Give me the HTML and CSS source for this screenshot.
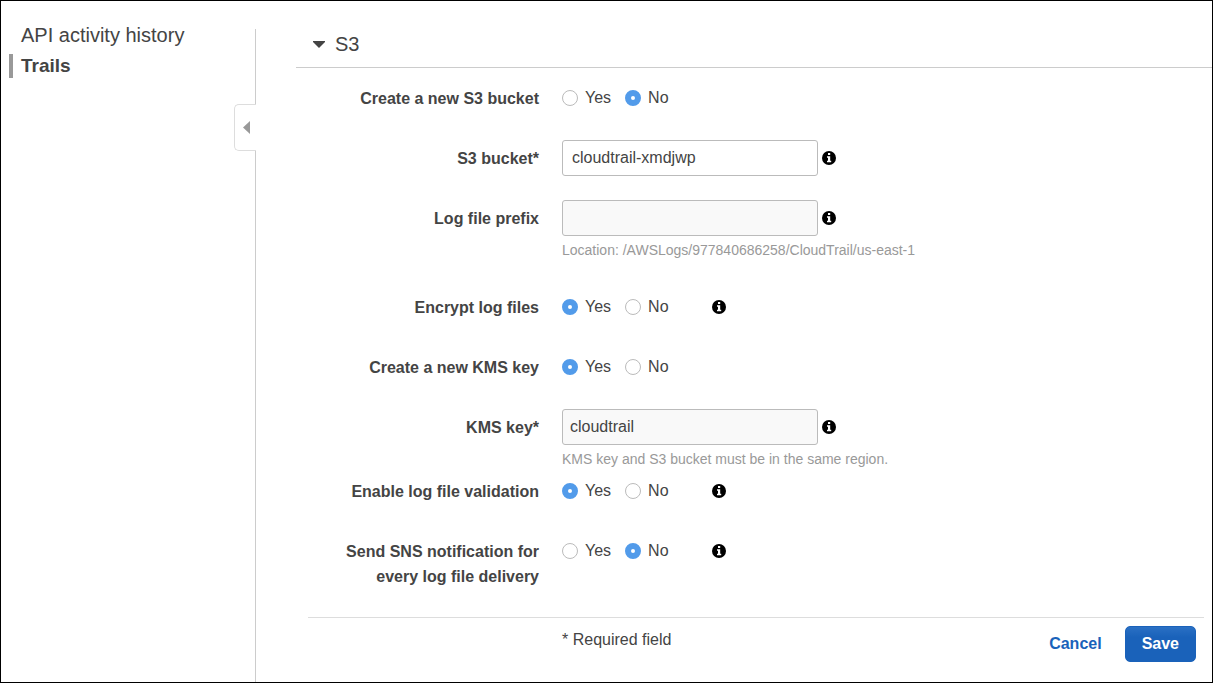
FILE: index.html
```html
<!DOCTYPE html>
<html lang="en">
<head>
<meta charset="utf-8">
<meta name="viewport" content="width=device-width, initial-scale=1">
<title>CloudTrail - Trails</title>
<link rel="stylesheet" href="styles.css">
</head>
<body>
<svg class="sprite" aria-hidden="true">
  <symbol id="info" viewBox="0 0 14 14">
    <circle cx="7" cy="7" r="7" fill="#000"/>
    <path fill="#fff" d="M6 2h2.200v2H6zM5 5.200h3.200V9.800H9.200v1.500H5V9.800h1V6.700H5z"/>
  </symbol>
</svg>
<div class="page">
  <aside class="sidebar">
    <nav class="nav">
      <a class="nav-link" href="#history">API activity history</a>
      <a class="nav-link current" href="#trails" aria-current="page">Trails</a>
    </nav>
    <div class="divider">
      <button class="collapse" type="button" aria-label="Collapse navigation"><svg width="7" height="13" viewBox="0 0 7 13"><path d="M7 0v13L0 6.500z" fill="#999"/></svg></button>
    </div>
  </aside>
  <main class="main">
    <h2 class="section-title"><svg width="12" height="7" viewBox="0 0 12 7" aria-hidden="true"><path d="M0 0h12v1L6 7 0 1z" fill="#444"/></svg>S3</h2>
    <form class="form">
      <div class="row" role="radiogroup" aria-labelledby="l1">
        <span class="label" id="l1">Create a new S3 bucket</span>
        <div class="control">
          <label class="option"><input type="radio" name="bucket-new">Yes</label>
          <label class="option"><input type="radio" name="bucket-new" checked>No</label>
        </div>
      </div>
      <div class="row">
        <label class="label" for="bucket">S3 bucket*</label>
        <div class="control"><input class="text plain" id="bucket" type="text" value="cloudtrail-xmdjwp"><svg class="info" role="img" aria-label="Info"><use href="#info"/></svg></div>
      </div>
      <div class="row spaced">
        <label class="label" for="prefix">Log file prefix</label>
        <div class="control"><input class="text" id="prefix" type="text"><svg class="info" role="img" aria-label="Info"><use href="#info"/></svg></div>
        <p class="hint">Location: /AWSLogs/977840686258/CloudTrail/us-east-1</p>
      </div>
      <div class="row" role="radiogroup" aria-labelledby="l2">
        <span class="label" id="l2">Encrypt log files</span>
        <div class="control">
          <label class="option"><input type="radio" name="encrypt" checked>Yes</label>
          <label class="option"><input type="radio" name="encrypt">No</label>
          <svg class="info far" role="img" aria-label="Info"><use href="#info"/></svg>
        </div>
      </div>
      <div class="row" role="radiogroup" aria-labelledby="l3">
        <span class="label" id="l3">Create a new KMS key</span>
        <div class="control">
          <label class="option"><input type="radio" name="kms-new" checked>Yes</label>
          <label class="option"><input type="radio" name="kms-new">No</label>
        </div>
      </div>
      <div class="row tight">
        <label class="label" for="kms">KMS key*</label>
        <div class="control"><input class="text" id="kms" type="text" value="cloudtrail"><svg class="info" role="img" aria-label="Info"><use href="#info"/></svg></div>
        <p class="hint">KMS key and S3 bucket must be in the same region.</p>
      </div>
      <div class="row" role="radiogroup" aria-labelledby="l4">
        <span class="label" id="l4">Enable log file validation</span>
        <div class="control">
          <label class="option"><input type="radio" name="validate" checked>Yes</label>
          <label class="option"><input type="radio" name="validate">No</label>
          <svg class="info far" role="img" aria-label="Info"><use href="#info"/></svg>
        </div>
      </div>
      <div class="row" role="radiogroup" aria-labelledby="l5">
        <span class="label" id="l5">Send SNS notification for every log file delivery</span>
        <div class="control">
          <label class="option"><input type="radio" name="sns">Yes</label>
          <label class="option"><input type="radio" name="sns" checked>No</label>
          <svg class="info far" role="img" aria-label="Info"><use href="#info"/></svg>
        </div>
      </div>
      <footer class="footer">
        <span class="required">* Required field</span>
        <div class="actions">
          <a class="cancel" href="#cancel">Cancel</a>
          <button class="save" type="button">Save</button>
        </div>
      </footer>
    </form>
  </main>
</div>
</body>
</html>
```

FILE: styles.css
```css
* {
  box-sizing: border-box;
}

body {
  margin: 0;
  background: #fff;
  color: #444;
  font: 16px/24px "Liberation Sans", Arial, sans-serif;
}

input,
button {
  font: inherit;
  color: inherit;
  margin: 0;
}

svg {
  display: block;
  flex: none;
}

.sprite {
  position: absolute;
  width: 0;
  height: 0;
}

.page {
  display: flex;
  min-height: 100vh;
  border: 1px solid #000;
}

.sidebar {
  display: flex;
  flex: none;
  width: 255px;
}

.nav {
  flex: 1;
  padding: 22px 0 0 8px;
}

.nav-link {
  display: block;
  margin-bottom: 7px;
  padding-left: 8px;
  border-left: 4px solid transparent;
  color: #444;
  font-size: 20px;
  line-height: 24px;
  text-decoration: none;
  white-space: nowrap;
}

.current {
  border-color: #999;
  font-size: 19px;
  font-weight: bold;
}

.divider {
  display: flex;
  flex-direction: column;
  align-items: flex-end;
  width: 22px;
  padding-top: 28px;
}

.divider::before,
.divider::after {
  content: "";
  width: 1px;
  background: #ccc;
}

.divider::before {
  height: 75px;
}

.divider::after {
  flex: 1;
}

.collapse {
  display: flex;
  align-items: center;
  justify-content: center;
  width: 22px;
  height: 47px;
  padding: 0 0 0 2px;
  border: 1px solid #ddd;
  border-right: 0;
  border-radius: 5px 0 0 5px;
  background: #fff;
}

.main {
  flex: 1;
  padding-left: 40px;
}

.section-title {
  display: flex;
  align-items: center;
  gap: 10px;
  height: 67px;
  margin: 0;
  padding: 20px 0 0 17px;
  border-bottom: 1px solid #ccc;
  font-size: 20px;
  font-weight: normal;
}

.form {
  padding: 12px 8px 0 12px;
}

.row {
  display: grid;
  grid-template-columns: 231px 1fr;
  column-gap: 23px;
  margin-bottom: 24px;
}

.spaced {
  margin-bottom: 25px;
}

.tight {
  margin-bottom: 0;
}

.label {
  padding: 6px 0 0 24px;
  font-weight: bold;
  line-height: 25px;
  text-align: right;
}

.control {
  display: flex;
  align-items: center;
  height: 36px;
}

.option {
  display: flex;
  align-items: center;
  gap: 7px;
  margin-right: 14px;
}

.option input {
  appearance: none;
  width: 16px;
  height: 16px;
  border: 1px solid #bbb;
  border-radius: 50%;
  background: #fff;
}

.option input:checked {
  border: 6px solid #529bea;
}

.text {
  width: 256px;
  height: 36px;
  padding: 0 7px;
  border: 1px solid #bbb;
  border-radius: 3px;
  background: #f9f9f9;
}

.plain {
  padding: 0 9px;
  background: #fff;
}

.info {
  width: 14px;
  height: 14px;
  margin-left: 4px;
}

.far {
  margin-left: 29px;
}

.hint {
  grid-column: 2;
  margin: 0;
  color: #999;
  font-size: 14px;
  line-height: 28px;
}

.footer {
  display: flex;
  justify-content: space-between;
  margin-top: 28px;
  padding: 8px 8px 0 254px;
  border-top: 1px solid #ddd;
}

.required {
  padding-top: 2px;
}

.actions {
  display: flex;
  align-items: center;
  gap: 23px;
}

.cancel {
  color: #1a62ba;
  font-weight: bold;
  text-decoration: none;
}

.save {
  height: 36px;
  padding: 0 16px;
  border: 1px solid #1a62ba;
  border-radius: 5px;
  background: linear-gradient(#2a70c4, #1a62ba 30%);
  color: #fff;
  font-weight: bold;
}
```
